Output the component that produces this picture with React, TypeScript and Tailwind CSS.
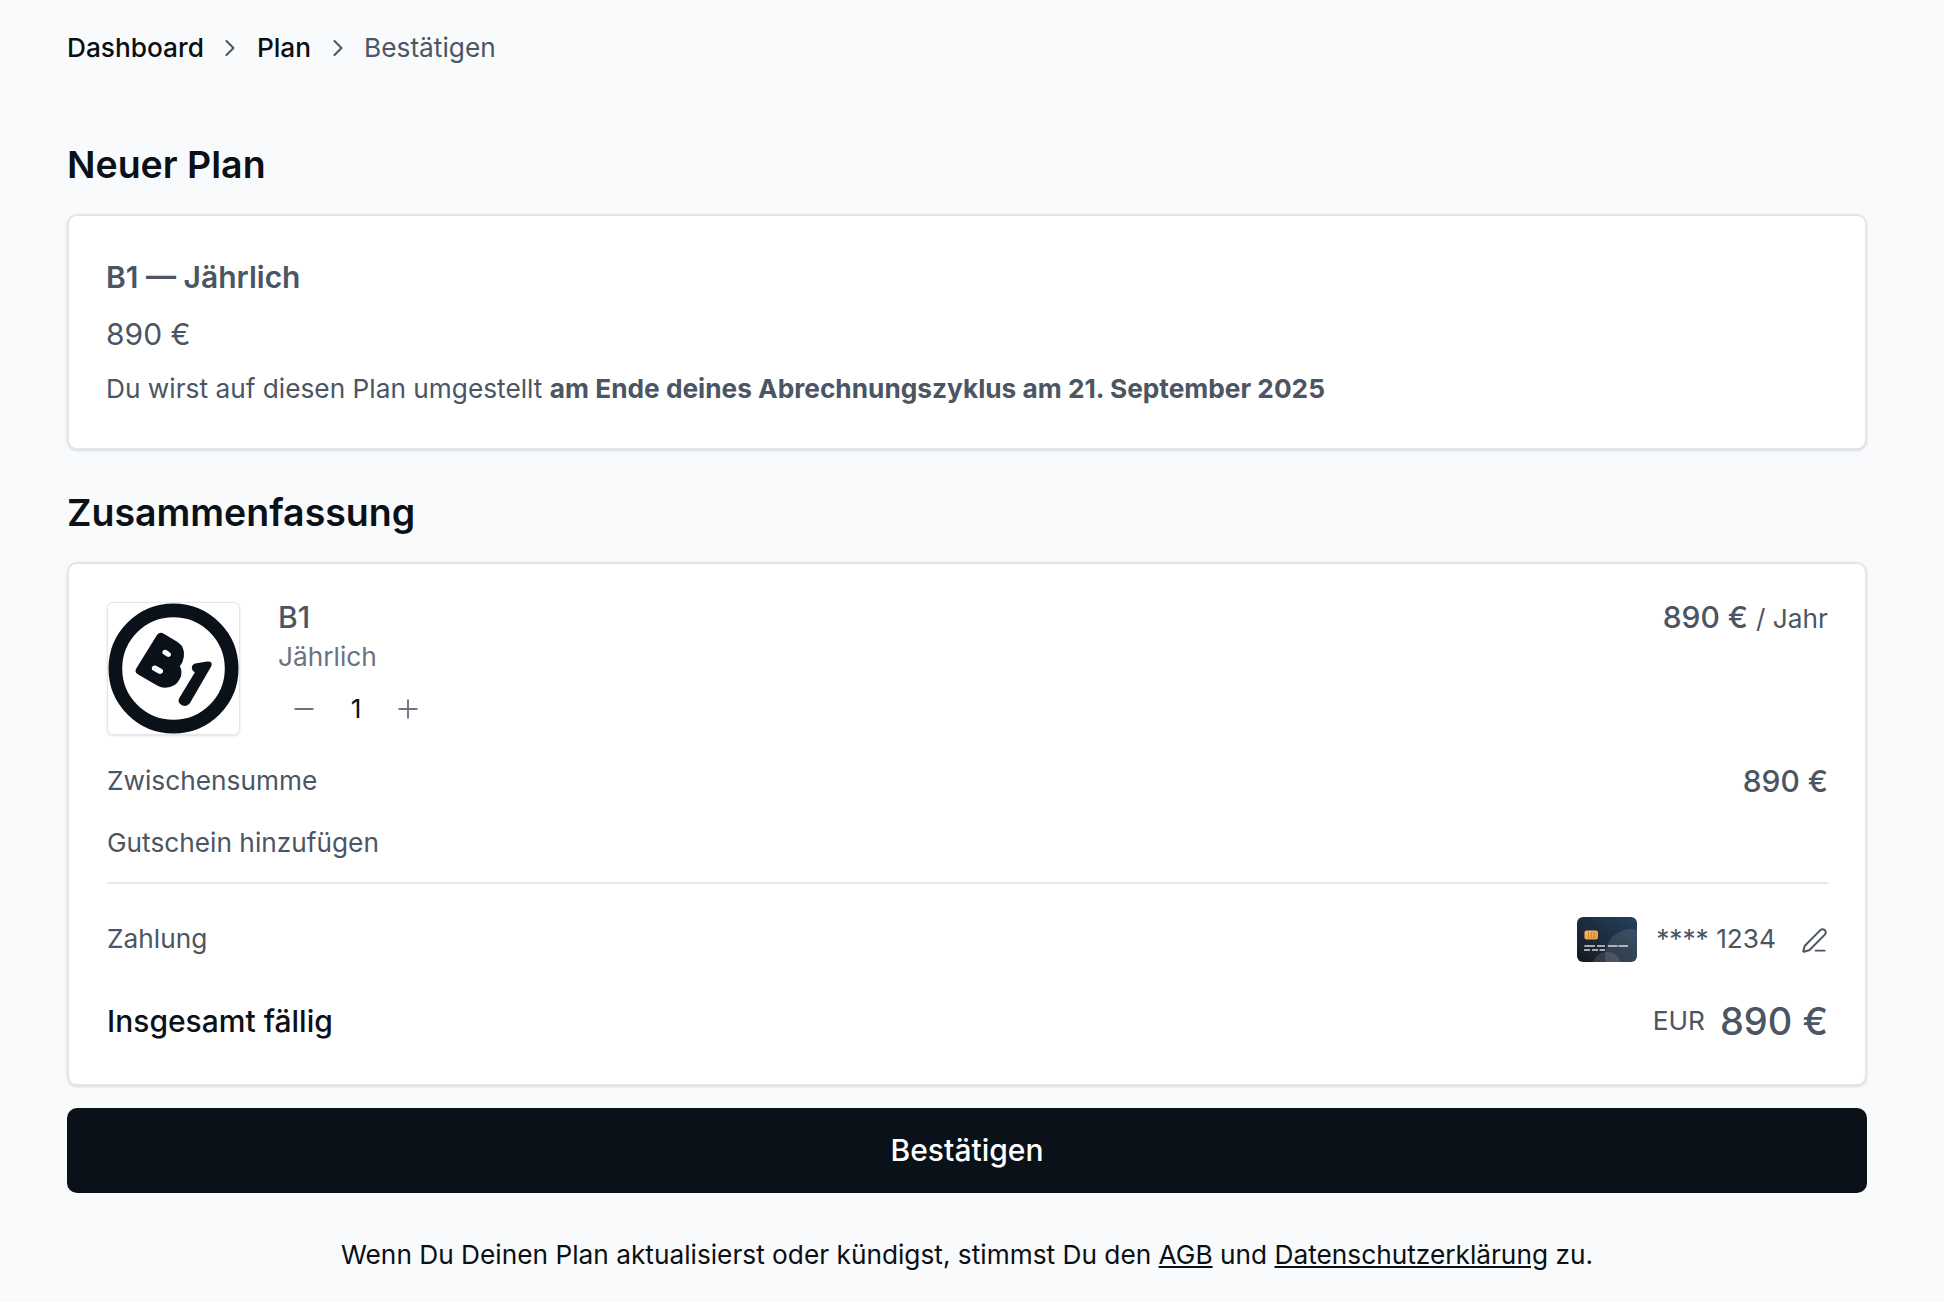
import { ChevronRight, Minus, Plus, PenLine } from "lucide-react";

function Logo() {
  return (
    <svg viewBox="25 25 392 392" className="w-full h-full">
      <circle cx="221" cy="221" r="174" fill="none" stroke="#0a1118" strokeWidth="41" />
      <path
        fillRule="evenodd"
        fill="#0a1118"
        d="M172 120 Q180 110 192 117 L232 141 Q256 156 252 186 Q250 202 240 214 Q250 232 240 252 Q226 282 188 278 Q180 277 172 272 L114 238 Q103 231 110 220 Z M190 167 Q184 174 192 179 L201 185 Q209 189 213 182 Q216 176 209 172 L200 166 Q194 163 190 167 Z M158 215 Q153 222 160 227 L176 236 Q184 240 189 233 Q192 226 185 222 L169 213 Q162 210 158 215 Z"
      />
      <path
        fill="#0a1118"
        d="M276 222 Q274 207 290 205 L322 200 Q340 199 334 214 L270 325 Q260 338 245 330 Q232 322 238 310 L285 232 Q278 230 276 222 Z"
      />
    </svg>
  );
}

function CardImage() {
  return (
    <svg viewBox="0 0 60 45" className="w-[60px] h-[45px] rounded-[6px] shrink-0 mt-[2px]">
      <defs>
        <linearGradient id="cardbg" x1="0" y1="1" x2="1" y2="0">
          <stop offset="0" stopColor="#16191f" />
          <stop offset="1" stopColor="#24405f" />
        </linearGradient>
        <linearGradient id="chip" x1="0" y1="0" x2="1" y2="1">
          <stop offset="0" stopColor="#f6bd63" />
          <stop offset="1" stopColor="#e8973f" />
        </linearGradient>
      </defs>
      <rect width="60" height="45" fill="url(#cardbg)" />
      <circle cx="54" cy="38" r="26" fill="#ffffff" fillOpacity="0.11" />
      <circle cx="30" cy="50" r="15" fill="#ffffff" fillOpacity="0.12" />
      <rect x="7.500" y="13.500" width="13.500" height="9" rx="2" fill="url(#chip)" />
      <path d="M11.500 15v6M14.300 15v6M17.100 15v6" stroke="#b97a2e" strokeWidth="0.8" />
      <path d="M7.300 29h10.700M20 29h8M31 29h9.600M41.500 29h9.500M7 33h6M15 33h6M22.500 33h5.500" stroke="#d5d8dc" strokeWidth="1.400" />
    </svg>
  );
}

export default function App() {
  return (
    <div className="min-h-[1302px] bg-[#f9fafb] pl-[67px] pr-[77px] pt-[31px] font-['Inter',sans-serif] text-[#4b5563]">
      <nav className="flex items-center h-[34px] text-[26.25px] leading-[34px]">
        <span className="text-[#0a0f14] font-medium">Dashboard</span>
        <ChevronRight className="w-[28px] h-[28px] mx-[12.5px] text-[#4b5563]" strokeWidth={1.75} />
        <span className="text-[#0a0f14] font-medium">Plan</span>
        <ChevronRight className="w-[28px] h-[28px] mx-[12.5px] text-[#4b5563]" strokeWidth={1.75} />
        <span>Bestätigen</span>
      </nav>

      <h2 className="mt-[75px] text-[37.5px] leading-[50px] font-semibold text-[#0a1118]">Neuer Plan</h2>
      <section className="mt-[24px] h-[236px] bg-white rounded-[10px] border-2 border-[#e2e5ea] shadow-sm px-[37px] pt-[41px]">
        <div className="text-[30px] leading-[40px] font-semibold">B1 — Jährlich</div>
        <div className="mt-[17px] text-[30px] leading-[40px]">890 €</div>
        <p className="mt-[17px] text-[26.25px] leading-[36px]">
          Du wirst auf diesen Plan umgestellt <strong className="font-bold">am Ende deines Abrechnungszyklus am 21. September 2025</strong>
        </p>
      </section>

      <h2 className="mt-[38px] text-[37.5px] leading-[50px] font-semibold text-[#0a1118]">Zusammenfassung</h2>
      <section className="mt-[24px] h-[524px] bg-white rounded-[10px] border-2 border-[#e2e5ea] shadow-sm pl-[38px] pr-[37px] pt-[38px]">
        <div className="flex">
          <div className="w-[133px] h-[133px] rounded-[6px] border-[1.5px] border-[#e2e5ea] shadow-sm shrink-0">
            <Logo />
          </div>
          <div className="ml-[38px] flex-1">
            <div className="text-[30px] leading-[34px] -mt-[2px] font-medium">B1</div>
            <div className="mt-[6px] text-[26.25px] leading-[34px] text-[#6b7280]">Jährlich</div>
            <div className="mt-[15px] flex items-center h-[40px]">
              <Minus className="w-[30px] h-[30px] ml-[11px] text-[#6b7280]" strokeWidth={1.5} />
              <span className="w-[30px] ml-[22px] text-[#0a0f14] text-[26.25px] text-center">1</span>
              <Plus className="w-[30px] h-[30px] ml-[22px] text-[#6b7280]" strokeWidth={1.5} />
            </div>
          </div>
          <div className="text-[30px] leading-[34px] font-medium -mt-[2px]">
            890 € <span className="text-[26.25px] font-normal">/ Jahr</span>
          </div>
        </div>

        <div className="mt-[26px] flex justify-between items-center h-[40px]">
          <span className="text-[26.25px]">Zwischensumme</span>
          <span className="text-[30px] font-medium">890 €</span>
        </div>
        <div className="mt-[22px] h-[40px] flex items-center text-[26.25px]">Gutschein hinzufügen</div>
        <div className="mt-[19px] border-t-2 border-[#e5e7eb]" />
        <div className="mt-[32px] flex items-center h-[45px] text-[26.25px]">
          <span className="flex-1">Zahlung</span>
          <CardImage />
          <span className="ml-[19px]">**** 1234</span>
          <PenLine className="ml-[25px] mt-[3px] w-[27px] h-[27px]" strokeWidth={1.75} />
        </div>
        <div className="mt-[35px] flex items-center h-[50px]">
          <span className="flex-1 text-[30px] font-medium text-[#0a1118]">Insgesamt fällig</span>
          <span className="text-[26.25px]">EUR</span>
          <span className="ml-[15px] text-[38px] font-medium">890 €</span>
        </div>
      </section>

      <button className="mt-[22px] w-full h-[85px] rounded-[10px] bg-[#0a1118] text-white text-[30px] font-medium">Bestätigen</button>

      <p className="mt-[44px] text-center text-[26.25px] leading-[36px] text-[#0a0f14]">
        Wenn Du Deinen Plan aktualisierst oder kündigst, stimmst Du den <a className="underline">AGB</a> und <a className="underline">Datenschutzerklärung</a> zu.
      </p>
    </div>
  );
}
